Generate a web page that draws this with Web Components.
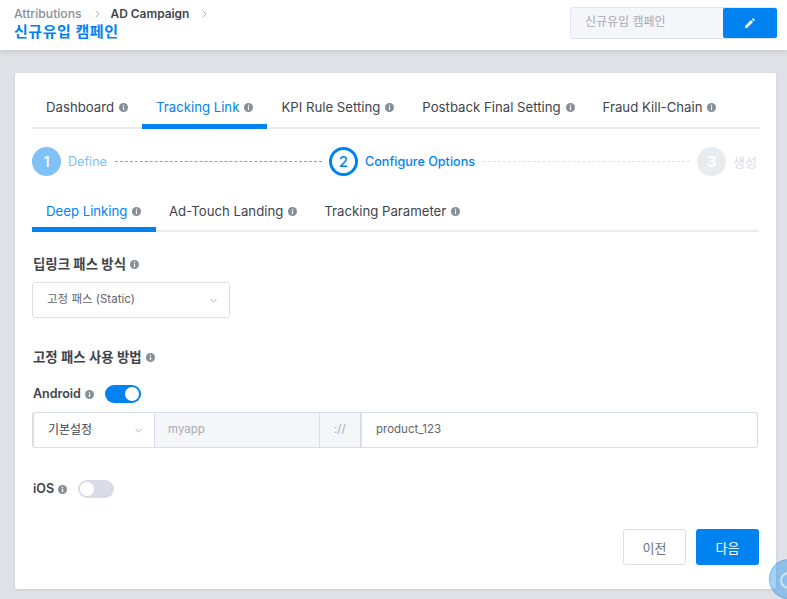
<!DOCTYPE html>
<html lang="ko">
<head>
<meta charset="utf-8">
<title>신규유입 캠페인</title>
<style>
  html, body { margin: 0; height: 599px; overflow: hidden; background: #dee1e5; }
  body { font-family: Inter, "Noto Sans CJK KR", sans-serif; color: #3e444c; }
</style>
</head>
<body>
<template id="info-tpl">
  <style>
    :host { display: inline-flex; width: 9px; height: 9px; border-radius: 50%; background: #868e96; align-items: center; justify-content: center; flex: none; }
    svg { display: block; }
  </style>
  <svg width="9" height="9" viewBox="0 0 9 9"><rect x="3.9" y="1.8" width="1.2" height="1.2" fill="#fff"/><rect x="3.9" y="3.7" width="1.2" height="3.4" fill="#fff"/></svg>
</template>

<script>
// small helper so each element only declares its markup
class Base extends HTMLElement {
  constructor() {
    super();
    this.attachShadow({ mode: 'open' });
  }
  connectedCallback() {
    this.shadowRoot.innerHTML = this.markup();
  }
}

class InfoDot extends HTMLElement {
  constructor() {
    super();
    this.attachShadow({ mode: 'open' });
    this.shadowRoot.appendChild(document.getElementById('info-tpl').content.cloneNode(true));
  }
}

class TopBar extends Base {
  markup() {
    return `
      <style>
        :host { display: flex; justify-content: space-between; height: 50px; box-sizing: border-box; padding: 7px 10px 0 14px; background: #fff; box-shadow: 0 1px 6px rgba(60,70,80,.2); position: relative; }
        .crumbs { display: flex; align-items: center; font-size: 12.2px; line-height: 14px; font-weight: 500; color: #868e96; }
        .crumbs b { font-size: 11.9px; font-weight: 600; color: #3e444c; margin-left: 11px; }
        .crumbs svg { margin-left: 13px; }
        h1 { margin: 1px 0 0; font-size: 15px; line-height: 20px; font-weight: 700; color: #0083f0; letter-spacing: .55px; }
        .edit { display: flex; width: 207px; height: 32px; box-sizing: border-box; border: 1px solid #e1e4ee; border-radius: 3px; background: #f4f6fa; }
        .edit span { flex: 1; font-size: 12px; line-height: 28px; color: #a6abb2; padding-left: 14px; }
        .edit button { width: 54px; height: 30px; margin-right: -1px; padding: 0; border: 0; border-radius: 2px; background: #0083f0; display: flex; align-items: center; justify-content: center; }
      </style>
      <div>
        <div class="crumbs">Attributions<svg width="5" height="8" viewBox="0 0 5 8"><path d="M.7.7 4 4 .7 7.3" fill="none" stroke="#adb3ba"/></svg><b>AD Campaign</b><svg width="5" height="8" viewBox="0 0 5 8"><path d="M.7.7 4 4 .7 7.3" fill="none" stroke="#adb3ba"/></svg></div>
        <h1>신규유입 캠페인</h1>
      </div>
      <div class="edit"><span>신규유입 캠페인</span><button aria-label="edit"><svg width="10" height="10" viewBox="0 0 10 10"><path d="M0 10V8L6 2 8 4 2 10ZM6.8 1.2 7.6.4Q8 0 8.400.4L9.600 1.600Q10 2 9.600 2.400L8.800 3.200Z" fill="#fff"/></svg></button></div>`;
  }
}

class TabBar extends Base {
  markup() {
    return `
      <style>
        :host { display: flex; border-bottom: 2px solid #e9ecef; height: 44px; box-sizing: border-box; font-size: 13.2px; line-height: 16px; }
        ::slotted(*) { margin-bottom: -2px; }
      </style>
      <slot></slot>`;
  }
}

class TabItem extends Base {
  markup() {
    const active = this.hasAttribute('active');
    return `
      <style>
        :host { display: flex; align-items: flex-start; gap: 5px; box-sizing: border-box; padding: ${this.getAttribute('top') || 14}px 14px 0; height: 44px; white-space: nowrap; color: ${active ? '#0083f0' : '#3e444c'}; border-bottom: ${active ? '5px solid #0083f0' : '0'}; }
        info-dot { margin-top: 4px; }
      </style>
      <span>${this.getAttribute('label')}</span><info-dot></info-dot>`;
  }
}

class StepBar extends Base {
  markup() {
    return `
      <style>
        :host { display: flex; align-items: center; height: 29px; font-size: 12.6px; padding-right: 2px; }
        .c { width: 29px; height: 29px; box-sizing: border-box; border-radius: 50%; display: flex; align-items: center; justify-content: center; font-size: 15px; font-weight: 500; flex: none; }
        .one { background: #80c1f7; color: #fff; }
        .two { border: 3px solid #0083f0; color: #0083f0; }
        .three { background: #e9ecef; color: #fff; font-weight: 700; }
        .t { margin-left: 7px; white-space: nowrap; }
        .l { flex: 1; margin: 0 7px 0 8px; border-top: 1px dashed; height: 0; }
      </style>
      <div class="c one">1</div><span class="t" style="color:#80c1f7">Define</span>
      <div class="l" style="color:#8fa3b5"></div>
      <div class="c two">2</div><span class="t" style="color:#0083f0;font-weight:500">Configure Options</span>
      <div class="l" style="color:#dfe2e6"></div>
      <div class="c three">3</div><span class="t" style="color:#dfe2e6;font-weight:500;font-size:13px">생성</span>`;
  }
}

class FieldLabel extends Base {
  markup() {
    return `
      <style>
        :host { display: flex; align-items: center; gap: 4px; margin-left: 1px; font-size: ${this.getAttribute('size') || 13.4}px; line-height: 16px; font-weight: 600; color: #3e444c; }
      </style>
      <slot></slot><info-dot></info-dot>`;
  }
}

class ToggleSwitch extends Base {
  markup() {
    const on = this.hasAttribute('on');
    return `
      <style>
        :host { display: flex; width: 36px; height: 18px; box-sizing: border-box; padding: 2px; border-radius: 9px; background: ${on ? '#0083f0' : '#d8dce8'}; justify-content: ${on ? 'flex-end' : 'flex-start'}; margin-left: 11px; }
        i { display: block; width: 14px; height: 14px; border-radius: 50%; background: #fff; }
      </style>
      <i></i>`;
  }
}

class SelectBox extends Base {
  markup() {
    return `
      <style>
        :host { display: flex; align-items: center; justify-content: space-between; box-sizing: border-box; width: 198px; height: 36px; padding: 0 12px 0 14px; border: 1px solid #dcdfea; border-radius: 3px; background: #fff; font-size: 11.5px; color: #5f666e; }
        span { margin-bottom: 4px; }
      </style>
      <span><slot></slot></span>
      <svg width="7" height="5" viewBox="0 0 7 5"><path d="M.6 1 3.500 3.900 6.400 1" fill="none" stroke="#a6abb2"/></svg>`;
  }
}

class PathRow extends Base {
  markup() {
    return `
      <style>
        :host { display: flex; height: 36px; width: 726px; box-sizing: border-box; border: 1px solid #d9dce9; border-left-width: 2px; border-radius: 3px; font-size: 11.5px; line-height: 32px; color: #5f666e; }
        div { box-sizing: border-box; border-right: 1px solid #d9dce9; }
        .sel { width: 121px; padding: 0 12px 0 14px; display: flex; align-items: center; justify-content: space-between; color: #3e444c; font-size: 12px; }
        .ro { background: #f4f6fa; color: #a6abb2; }
        .app { width: 165px; padding-left: 13px; }
        .sep { width: 42px; padding-left: 14px; border-right-width: 2px; }
        .val { flex: 1; padding-left: 14px; border: 0; }
      </style>
      <div class="sel"><span>기본설정</span><svg width="7" height="5" viewBox="0 0 7 5"><path d="M.6 1 3.500 3.900 6.400 1" fill="none" stroke="#a6abb2"/></svg></div>
      <div class="ro app">myapp</div>
      <div class="ro sep">://</div>
      <div class="val">product_123</div>`;
  }
}

class ActionButton extends Base {
  markup() {
    const primary = this.hasAttribute('primary');
    return `
      <style>
        :host { display: flex; align-items: center; justify-content: center; box-sizing: border-box; width: 63px; height: 36px; border-radius: 3px; font-size: 13px; ${primary ? 'background:#0083f0;color:#fff;' : 'background:#fff;color:#6d747c;border:1px solid #dcdfea;'} }
      </style>
      <slot></slot>`;
  }
}

class CampaignCard extends Base {
  markup() {
    return `
      <style>
        :host { display: block; box-sizing: border-box; width: 761px; height: 516px; margin: 23px 0 0 15px; padding: 12px 17px 0; background: #fff; border-radius: 2px; box-shadow: 0 1px 3px rgba(60,70,80,.15); }
      </style>
      <slot></slot>`;
  }
}

class HelpBubble extends Base {
  markup() {
    return `
      <style>
        :host { display: block; position: absolute; left: 769px; top: 559px; width: 40px; height: 40px; box-sizing: border-box; border-radius: 50%; background: rgba(0,131,240,.36); border: 1px solid rgba(0,115,220,.25); }
        i { display: block; position: absolute; left: 10px; top: 12px; width: 17px; height: 17px; box-sizing: border-box; border: 2px solid rgba(255,255,255,.6); border-radius: 50%; }
      </style>
      <i></i>`;
  }
}

customElements.define('info-dot', InfoDot);
customElements.define('top-bar', TopBar);
customElements.define('tab-bar', TabBar);
customElements.define('tab-item', TabItem);
customElements.define('step-bar', StepBar);
customElements.define('field-label', FieldLabel);
customElements.define('toggle-switch', ToggleSwitch);
customElements.define('select-box', SelectBox);
customElements.define('path-row', PathRow);
customElements.define('action-button', ActionButton);
customElements.define('campaign-card', CampaignCard);
customElements.define('help-bubble', HelpBubble);
</script>

<top-bar></top-bar>
<campaign-card>
  <tab-bar>
    <tab-item label="Dashboard"></tab-item>
    <tab-item label="Tracking Link" active></tab-item>
    <tab-item label="KPI Rule Setting"></tab-item>
    <tab-item label="Postback Final Setting"></tab-item>
    <tab-item label="Fraud Kill-Chain"></tab-item>
  </tab-bar>
  <step-bar style="margin-top:18px"></step-bar>
  <tab-bar style="margin-top:12px">
    <tab-item label="Deep Linking" top="15" active style="width:124px"></tab-item>
    <tab-item label="Ad-Touch Landing" top="15" style="margin-left:-1px"></tab-item>
    <tab-item label="Tracking Parameter" top="15" style="margin-left:-1px"></tab-item>
  </tab-bar>
  <field-label style="margin-top:24px">딥링크 패스 방식</field-label>
  <select-box style="margin-top:10px">고정 패스 (Static)</select-box>
  <field-label style="margin-top:31px">고정 패스 사용 방법</field-label>
  <div style="display:flex;align-items:center;margin-top:20px">
    <field-label size="12.5">Android</field-label><toggle-switch on></toggle-switch>
  </div>
  <path-row style="margin-top:9px"></path-row>
  <div style="display:flex;align-items:center;margin-top:32px">
    <field-label size="12.5">iOS</field-label><toggle-switch></toggle-switch>
  </div>
  <div style="display:flex;justify-content:flex-end;gap:10px;margin-top:31px">
    <action-button>이전</action-button>
    <action-button primary>다음</action-button>
  </div>
</campaign-card>
<help-bubble></help-bubble>
</body>
</html>
